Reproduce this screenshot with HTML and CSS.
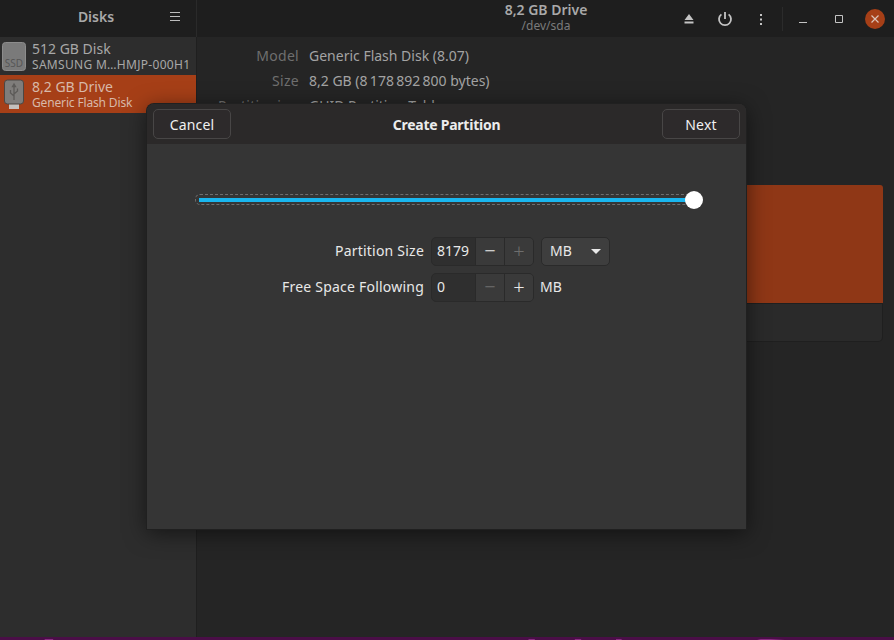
FILE: index.html
```html
<!DOCTYPE html>
<html lang="en">

<head>
  <meta charset="UTF-8" />
  <title>Disks</title>
  <link rel="stylesheet" href="styles.css">
</head>

<body>
  <div class="window">
    <header class="titlebar">
      <div class="titlebar-left">
        <span class="app-name">Disks</span>
        <svg class="menu-icon" width="12" height="10" viewBox="0 0 12 10">
          <path d="M1 .5h10M1 4.500h10M1 8.500h10" stroke="#bdbdbd" fill="none" />
        </svg>
      </div>
      <div class="titlebar-center">
        <div class="drive-title">8,2 GB Drive</div>
        <div class="drive-path">/dev/sda</div>
      </div>
      <div class="titlebar-actions">
        <svg class="tool-icon" width="16" height="16" viewBox="0 0 16 16">
          <path d="M8 3l4.500 6h-9z M3.500 10.500h9v2h-9z" fill="#c4c4c4" />
        </svg>
        <svg class="tool-icon" width="16" height="16" viewBox="0 0 16 16">
          <path d="M8 1v7M4.400 3.400a6 6 0 1 0 7.200 0" stroke="#c4c4c4" stroke-width="1.800" fill="none" />
        </svg>
        <svg class="tool-icon" width="16" height="16" viewBox="0 0 16 16">
          <path d="M7 3h2v2H7zM7 7.500h2v2H7zM7 12h2v2H7z" fill="#c4c4c4" />
        </svg>
        <span class="titlebar-sep"></span>
        <svg class="win-btn" width="16" height="16" viewBox="0 0 16 16">
          <path d="M4 11.500h8" stroke="#c4c4c4" fill="none" />
        </svg>
        <svg class="win-btn" width="16" height="16" viewBox="0 0 16 16">
          <path d="M4.500 4.500h7v7h-7z" stroke="#c4c4c4" fill="none" />
        </svg>
        <span class="close-btn">
          <svg width="10" height="10" viewBox="0 0 10 10">
            <path d="M1.500 1.500l7 7M8.500 1.500l-7 7" stroke="#dcc4ba" stroke-width="1.200" fill="none" />
          </svg>
        </span>
      </div>
    </header>

    <div class="content">
      <aside class="sidebar">
        <div class="disk-row">
          <svg class="disk-icon" width="26" height="30" viewBox="0 0 26 30">
            <rect x="1.500" y="1.500" width="23" height="28" rx="3" fill="#7a7a7a" stroke="#8c8c8c" />
            <text x="13" y="26" class="ssd-label">SSD</text>
          </svg>
          <div class="disk-text">
            <div class="disk-name">512 GB Disk</div>
            <div class="disk-model wide">SAMSUNG M…HMJP-000H1</div>
          </div>
        </div>
        <div class="disk-row selected">
          <svg class="disk-icon" width="26" height="30" viewBox="0 0 26 30">
            <rect x="8" y="25" width="10" height="5" fill="#c4c0bd" />
            <rect x="3.500" y="1" width="19" height="24" rx="3" fill="#7f7d7b" stroke="#4d4743" />
            <path d="M13 5v16M13 5l-1.500 2.500h3zM13 17l-3.500-3v-3M13 15l3.500-3v-2.500" stroke="#5c5a58" stroke-width="1.300" fill="none" />
          </svg>
          <div class="disk-text">
            <div class="disk-name">8,2 GB Drive</div>
            <div class="disk-model">Generic Flash Disk</div>
          </div>
        </div>
      </aside>

      <main class="main">
        <div class="info-row"><span class="info-label">Model</span><span class="info-value">Generic Flash Disk (8.07)</span></div>
        <div class="info-row"><span class="info-label">Size</span><span class="info-value">8,2 GB (8&#8239;178&#8239;892&#8239;800 bytes)</span></div>
        <div class="info-row"><span class="info-label">Partitioning</span><span class="info-value">GUID Partition Table</span></div>
        <div class="partition-map">
          <div class="partition-free"></div>
          <div class="partition-foot"></div>
        </div>
      </main>
    </div>
  </div>

  <div class="wallpaper">
    <svg width="894" height="3" viewBox="0 0 894 3">
      <path d="M43 3l2-3h8l1 3zM526 3l3-3h6l-1 3zM574 3l1-3h6l1 3zM616 3v-3h5l4 3zM757 0h14l14 1-3 2h-14z" fill="#8a2c82" />
    </svg>
  </div>

  <section class="dialog">
    <div class="dialog-header">
      <button class="header-btn">Cancel</button>
      <span class="dialog-title">Create Partition</span>
      <button class="header-btn">Next</button>
    </div>
    <div class="dialog-body">
      <div class="slider">
        <div class="slider-trough">
          <div class="slider-fill"></div>
        </div>
        <div class="slider-knob"></div>
      </div>

      <div class="form-row">
        <label class="form-label">Partition Size</label>
        <div class="spin">
          <span class="spin-value">8179</span>
          <span class="spin-btn">−</span>
          <span class="spin-btn off">+</span>
        </div>
        <div class="unit-select"><span class="unit-name">MB</span><span class="caret"></span></div>
      </div>
      <div class="form-row">
        <label class="form-label">Free Space Following</label>
        <div class="spin">
          <span class="spin-value">0</span>
          <span class="spin-btn off">−</span>
          <span class="spin-btn">+</span>
        </div>
        <span class="unit-text">MB</span>
      </div>
    </div>
  </section>
</body>

</html>
```

FILE: styles.css
```css
html,
body {
  margin: 0;
  height: 640px;
  overflow: hidden;
}

body {
  font-family: "Noto Sans", sans-serif;
  font-size: 14px;
  background-color: #4a0e47;
  color: #e8e8e8;
  position: relative;
}

.window {
  height: 637px;
  display: flex;
  flex-direction: column;
  background-color: #252525;
}

/* Barra de titulo */
.titlebar {
  height: 37px;
  flex: none;
  display: flex;
  background-color: #1e1e1e;
}

.titlebar-left {
  width: 196px;
  height: 33px;
  padding-bottom: 4px;
  flex: none;
  display: flex;
  align-items: center;
  justify-content: center;
  position: relative;
  border-right: 1px solid #2a2a2a;
}

.app-name {
  font-weight: 600;
  font-size: 14px;
  color: #a9a9a9;
  margin-left: -4px;
}

.menu-icon {
  position: absolute;
  left: 169px;
  top: 12px;
}

.titlebar-center {
  flex: 1;
  padding-top: 2px;
  margin-right: 150px;
  margin-left: 151px;
  white-space: nowrap;
  display: flex;
  flex-direction: column;
  align-items: center;
}

.drive-title {
  font-weight: 600;
  font-size: 14px;
  line-height: 16px;
  color: #a9a9a9;
}

.drive-path {
  font-size: 12px;
  line-height: 14px;
  margin-top: 1px;
  color: #7b7b7b;
}

.titlebar-actions {
  display: flex;
  align-items: center;
  padding-right: 9px;
  position: absolute;
  right: 0;
  top: 0;
  height: 37px;
}

.tool-icon {
  margin-right: 20px;
}

.titlebar-sep {
  width: 1px;
  height: 24px;
  background-color: #2b2b2b;
  margin-left: -7px;
  margin-right: 12px;
}

.win-btn {
  margin-right: 20px;
}

.close-btn {
  width: 20px;
  height: 20px;
  margin-left: -2px;
  border-radius: 50%;
  background-color: #a63f17;
  display: flex;
  align-items: center;
  justify-content: center;
}

/* Contenido */
.content {
  flex: 1;
  display: flex;
}

.sidebar {
  width: 196px;
  flex: none;
  background-color: #2d2d2d;
  border-right: 1px solid #1f1f1f;
}

.disk-row {
  height: 38px;
  display: flex;
  align-items: center;
  padding-left: 1px;
  color: #a8a8a8;
}

.disk-row.selected {
  background-color: #a63f17;
  color: #d8b9a9;
}

.disk-icon {
  flex: none;
  margin-right: 5px;
}

.ssd-label {
  font-size: 10px;
  fill: #565656;
  text-anchor: middle;
}

.disk-name {
  font-size: 14px;
  line-height: 16px;
}

.disk-model {
  font-size: 12px;
  line-height: 14px;
  margin-top: 1px;
  letter-spacing: -0.15px;
  white-space: nowrap;
}

.disk-model.wide {
  letter-spacing: 0.3px;
}

.main {
  flex: 1;
  padding-top: 6px;
  padding-right: 11px;
}

.info-row {
  height: 25px;
  display: flex;
  align-items: center;
  font-size: 14px;
}

.info-label {
  width: 102px;
  text-align: right;
  letter-spacing: 0.3px;
  color: #6f6f6f;
  margin-right: 10px;
}

.info-value {
  color: #a3a3a3;
}

.partition-map {
  margin-top: 67px;
  margin-left: 22px;
}

.partition-free {
  height: 118px;
  background-color: #8f3716;
  border-top-right-radius: 3px;
}

.partition-foot {
  height: 37px;
  background-color: #2a2a2a;
  border-top: 1px solid #1f1f1f;
  border-right: 1px solid #1f1f1f;
  border-bottom: 1px solid #1f1f1f;
  border-bottom-right-radius: 5px;
}

.wallpaper {
  height: 3px;
  line-height: 0;
}

/* Dialogo */
.dialog {
  position: absolute;
  left: 147px;
  top: 104px;
  width: 599px;
  height: 425px;
  display: flex;
  flex-direction: column;
  background-color: #353535;
  border-radius: 7px 7px 0 0;
  box-shadow: 0 0 0 1px #202020, 0 4px 22px rgba(0, 0, 0, 0.55);
}

.dialog-header {
  height: 40px;
  flex: none;
  display: flex;
  align-items: center;
  justify-content: space-between;
  padding: 0 6px;
  background-color: #2b2929;
  border-radius: 7px 7px 0 0;
}

.header-btn {
  width: 78px;
  height: 30px;
  padding: 0;
  font-family: inherit;
  font-size: 14px;
  letter-spacing: 0.15px;
  color: #f0f0f0;
  background-color: #2d2a2b;
  border: 1px solid #484646;
  border-radius: 5px;
}

.dialog-title {
  font-weight: 700;
  font-size: 14px;
  letter-spacing: -0.25px;
  color: #ececec;
}

.dialog-body {
  flex: 1;
  padding-top: 50px;
}

.slider {
  position: relative;
  margin-left: 48px;
  width: 500px;
  height: 11px;
  margin-bottom: 32px;
}

.slider-trough {
  height: 9px;
  border: 1px dashed #6e6e6e;
  border-radius: 5px;
  display: flex;
  align-items: center;
  padding: 0 3px 0 3px;
}

.slider-fill {
  height: 4px;
  width: 100%;
  background-color: #19b6ee;
}

.slider-knob {
  position: absolute;
  left: 490px;
  top: -3px;
  width: 18px;
  height: 18px;
  border-radius: 50%;
  background-color: #fff;
}

.form-row {
  display: flex;
  align-items: center;
  height: 29px;
  margin-bottom: 7px;
}

.form-label {
  width: 277px;
  text-align: right;
  margin-right: 7px;
  padding-bottom: 2px;
  letter-spacing: 0.22px;
  color: #e8e8e8;
}

.spin {
  display: flex;
  width: 101px;
  height: 27px;
  border: 1px solid #2a2a2a;
  border-radius: 5px;
  background-color: #2f2f2f;
  overflow: hidden;
}

.spin-value {
  flex: 1;
  padding-left: 5px;
  line-height: 25px;
  color: #e8e8e8;
}

.spin-btn {
  width: 28px;
  border-left: 1px solid #2a2a2a;
  background-color: #3a3a3a;
  text-align: center;
  font-size: 20px;
  font-weight: 300;
  line-height: 26px;
  color: #e8e8e8;
}

.spin-btn.off {
  color: #6e6e6e;
}

.unit-select {
  width: 51px;
  height: 27px;
  margin-left: 7px;
  border: 1px solid #2a2a2a;
  border-radius: 5px;
  background-color: #3e3e3e;
  display: flex;
  align-items: center;
  justify-content: space-between;
  padding: 0 8px;
}

.unit-name {
  padding-bottom: 2px;
}

.caret {
  width: 0;
  height: 0;
  border-left: 5px solid transparent;
  border-right: 5px solid transparent;
  border-top: 5px solid #e8e8e8;
}

.unit-text {
  margin-left: 6px;
  padding-bottom: 2px;
}
```
